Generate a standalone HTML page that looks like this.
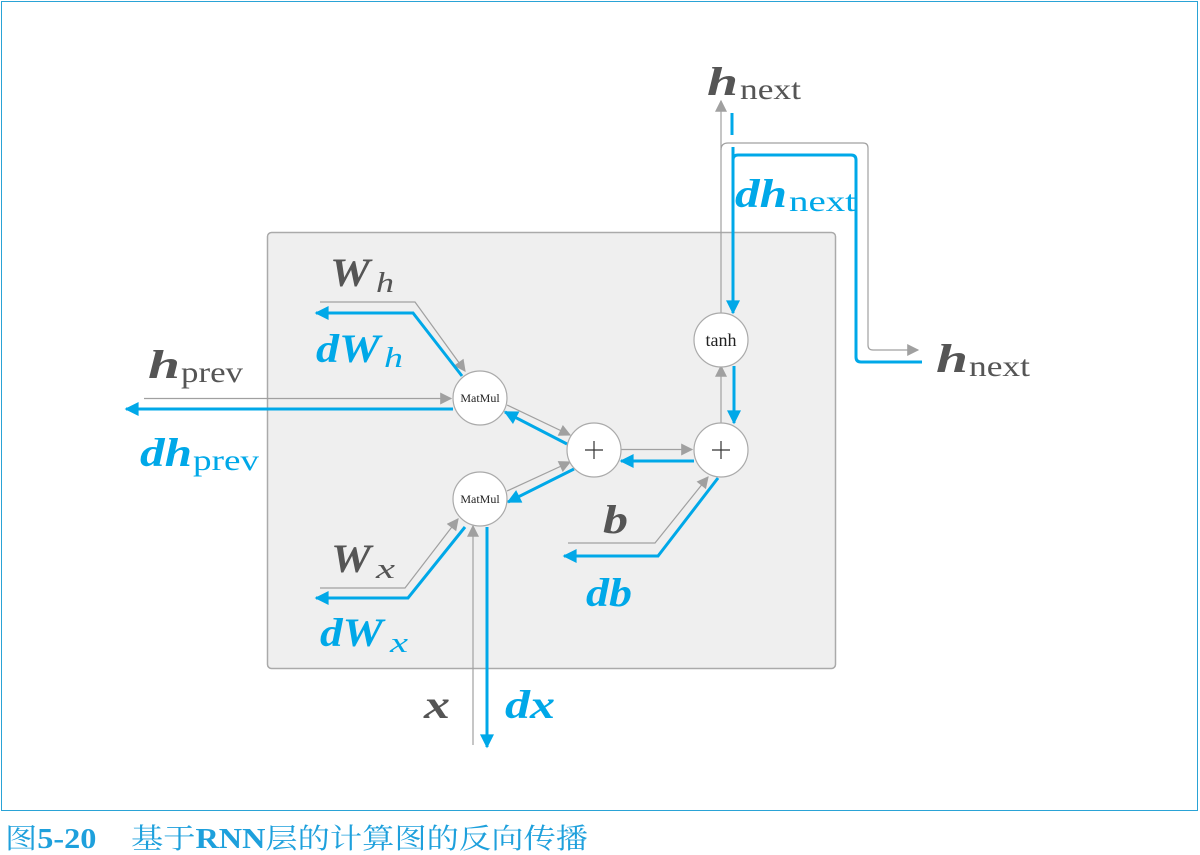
<!DOCTYPE html>
<html><head><meta charset="utf-8"><style>
html,body{margin:0;padding:0;background:#fff;width:1200px;height:855px;overflow:hidden}
svg{display:block}
.l{font-family:"Liberation Serif",serif;font-weight:bold;font-style:italic;font-size:40px}
.s{font-family:"Liberation Serif",serif;font-size:30px}
.si{font-family:"Liberation Serif",serif;font-style:italic;font-size:28px}
</style></head><body>
<svg width="1200" height="855" viewBox="0 0 1200 855" xmlns="http://www.w3.org/2000/svg">
<defs>
<marker id="ga" viewBox="0 0 10 10" refX="9" refY="5" markerWidth="14" markerHeight="12" markerUnits="userSpaceOnUse" orient="auto"><path d="M0,0L10,5L0,10z" fill="#a0a0a0"/></marker>
<marker id="ba" viewBox="0 0 10 10" refX="9" refY="5" markerWidth="16" markerHeight="14" markerUnits="userSpaceOnUse" orient="auto"><path d="M0,0L10,5L0,10z" fill="#00a8e8"/></marker>
</defs>
<rect x="1.5" y="1.5" width="1196" height="809" fill="none" stroke="#2aa3d6" stroke-width="1"/>
<rect x="267.5" y="232.5" width="568" height="436" rx="4" fill="#efefef" stroke="#aaa" stroke-width="1.5"/>
<g fill="none" stroke="#a0a0a0" stroke-width="1.2">
<path d="M144 398.5H451" marker-end="url(#ga)"/>
<path d="M320 302H415L465 371" marker-end="url(#ga)"/>
<path d="M507 405L570 435" marker-end="url(#ga)"/>
<path d="M507 491L570 462" marker-end="url(#ga)"/>
<path d="M621 449.5H692" marker-end="url(#ga)"/>
<path d="M721 423V366" marker-end="url(#ga)"/>
<path d="M721 313V101" marker-end="url(#ga)"/>
<path d="M721 150Q721 143 728 143H863Q868 143 868 148V345Q868 350 873 350H918" marker-end="url(#ga)"/>
<path d="M568 543H655L708 477" marker-end="url(#ga)"/>
<path d="M320 588H405L458 519" marker-end="url(#ga)"/>
<path d="M473 745V526" marker-end="url(#ga)"/>
</g>
<g fill="none" stroke="#00a8e8" stroke-width="3">
<path d="M453 409H126" marker-end="url(#ba)"/>
<path d="M462 376L413 313H316" marker-end="url(#ba)"/>
<path d="M567 444L505 412" marker-end="url(#ba)"/>
<path d="M574 469L508 502" marker-end="url(#ba)"/>
<path d="M694 461H621" marker-end="url(#ba)"/>
<path d="M734 366V423" marker-end="url(#ba)"/>
<path d="M732 113V135"/>
<path d="M733 147V313" marker-end="url(#ba)"/>
<path d="M733 160Q733 155 738 155H851Q856 155 856 160V357Q856 362 861 362H922"/>
<path d="M718 478L658 556H564" marker-end="url(#ba)"/>
<path d="M465 527L408 598H316" marker-end="url(#ba)"/>
<path d="M487 527V747" marker-end="url(#ba)"/>
</g>
<g fill="#fff" stroke="#aaa" stroke-width="1.2">
<circle cx="480" cy="398" r="27"/><circle cx="480" cy="499" r="27"/>
<circle cx="594" cy="450" r="27"/><circle cx="721" cy="450" r="27"/><circle cx="721" cy="340" r="27"/>
</g>
<g font-family="Liberation Serif,serif" fill="#222" text-anchor="middle">
<text x="480" y="402" font-size="12">MatMul</text>
<text x="480" y="503" font-size="12">MatMul</text>
<text x="721" y="346" font-size="18">tanh</text>
</g>
<g stroke="#333" stroke-width="1.2"><path d="M585 450H603M594 441V459M712 450H730M721 441V459"/></g>
<g fill="#555">
<text x="707" y="95" class="l" textLength="31" lengthAdjust="spacingAndGlyphs">h</text>
<text x="740" y="99" class="s" textLength="61" lengthAdjust="spacingAndGlyphs">next</text>
<text x="936" y="372" class="l" textLength="32" lengthAdjust="spacingAndGlyphs">h</text>
<text x="969" y="376" class="s" textLength="61" lengthAdjust="spacingAndGlyphs">next</text>
<text x="148" y="378" class="l" textLength="32" lengthAdjust="spacingAndGlyphs">h</text>
<text x="181" y="382" class="s" textLength="62" lengthAdjust="spacingAndGlyphs">prev</text>
<text x="330" y="286" class="l" textLength="40" lengthAdjust="spacingAndGlyphs">W</text>
<text x="376" y="292" class="si" textLength="18" lengthAdjust="spacingAndGlyphs">h</text>
<text x="331" y="572" class="l" textLength="40" lengthAdjust="spacingAndGlyphs">W</text>
<text x="376" y="578" class="si" textLength="19" lengthAdjust="spacingAndGlyphs">x</text>
<text x="603" y="533" class="l" textLength="25" lengthAdjust="spacingAndGlyphs">b</text>
<text x="424" y="718" class="l" textLength="26" lengthAdjust="spacingAndGlyphs">x</text>
</g>
<g fill="#00a8e8">
<text x="735" y="207" class="l" textLength="52" lengthAdjust="spacingAndGlyphs">dh</text>
<text x="789" y="211" class="s" textLength="67" lengthAdjust="spacingAndGlyphs">next</text>
<text x="140" y="466" class="l" textLength="52" lengthAdjust="spacingAndGlyphs">dh</text>
<text x="193" y="470" class="s" textLength="66" lengthAdjust="spacingAndGlyphs">prev</text>
<text x="316" y="362" class="l" textLength="64" lengthAdjust="spacingAndGlyphs">dW</text>
<text x="384" y="367" class="si" textLength="19" lengthAdjust="spacingAndGlyphs">h</text>
<text x="320" y="646" class="l" textLength="63" lengthAdjust="spacingAndGlyphs">dW</text>
<text x="390" y="652" class="si" textLength="18" lengthAdjust="spacingAndGlyphs">x</text>
<text x="586" y="606" class="l" textLength="46" lengthAdjust="spacingAndGlyphs">db</text>
<text x="505" y="718" class="l" textLength="50" lengthAdjust="spacingAndGlyphs">dx</text>
</g>
<text x="5" y="848" fill="#1ea0dc" font-size="28" font-family="Liberation Serif,'Noto Serif CJK SC',serif" textLength="583" lengthAdjust="spacingAndGlyphs">图<tspan font-weight="bold">5-20</tspan><tspan dx="30">基于</tspan><tspan font-weight="bold">RNN</tspan>层的计算图的反向传播</text>
</svg>
</body></html>
